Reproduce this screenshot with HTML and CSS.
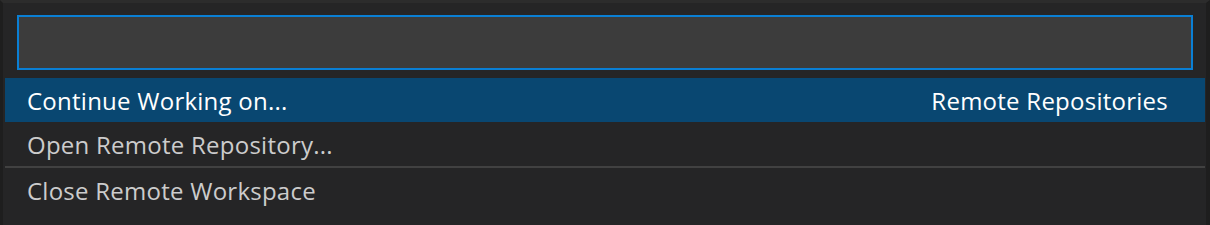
FILE: index.html
```html
<!DOCTYPE html>
<html lang="en">

<head>
    <meta charset="UTF-8">
    <title>Quick Pick</title>
    <link rel="stylesheet" href="styles.css">
</head>

<body>
    <div class="frame">
        <div class="input-box">
            <input type="text" class="filter">
        </div>
        <ul class="list">
            <li class="item active">
                <span class="label">Continue Working on...</span>
                <span class="detail">Remote Repositories</span>
            </li>
            <li class="item">
                <span class="label">Open Remote Repository...</span>
            </li>
            <li class="item sep">
                <span class="label">Close Remote Workspace</span>
            </li>
        </ul>
    </div>
</body>

</html>
```

FILE: styles.css
```css
* {
    box-sizing: border-box;
}

body {
    margin: 0;
    padding: 0;
    width: 1210px;
    height: 225px;
    background-color: #252526;
    font-family: "Open Sans", "Noto Sans", sans-serif;
    overflow: hidden;
}

.frame {
    height: 225px;
    border-top: 3px solid #2c2c2c;
    border-left: 3px solid #1e1e1e;
    border-right: 4px solid #1e1e1e;
    background-color: #252526;
}

.input-box {
    padding: 12px 13px 0 14px;
}

.filter {
    display: block;
    width: 100%;
    height: 55px;
    margin: 0;
    border: 2px solid #0a7fd4;
    background-color: #3c3c3c;
    outline: none;
}

.list {
    list-style: none;
    margin: 8px 1px 0 2px;
    padding: 0;
}

.item {
    height: 44px;
    display: flex;
    justify-content: space-between;
    align-items: center;
    padding: 0 37px 0 22px;
    color: #cccccc;
    font-size: 24px;
    letter-spacing: 0.25px;
}

.item.active {
    background-color: #094771;
    color: #ffffff;
}

.item.sep {
    height: 46px;
    border-top: 2px solid #414141;
}
```
